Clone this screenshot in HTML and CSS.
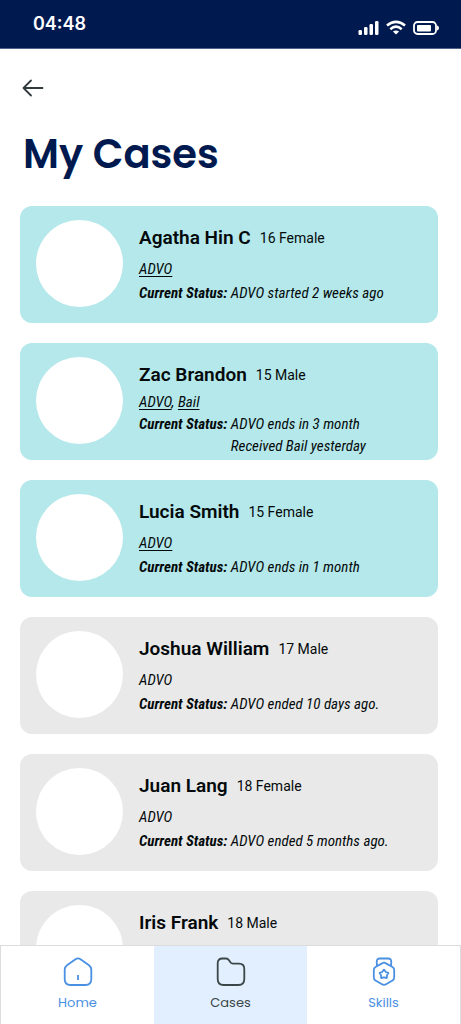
FILE: index.html
```html
<!DOCTYPE html>
<html lang="en">
<head>
<meta charset="utf-8">
<meta name="viewport" content="width=device-width, initial-scale=1">
<title>My Cases</title>
<link rel="stylesheet" href="styles.css">
</head>
<body>
<header class="status-bar">
  <time class="clock">04:48</time>
  <div class="indicators">
    <svg width="21" height="16" viewBox="0 0 21 16" fill="#fff" aria-hidden="true"><rect x="0.500" y="10" width="3.500" height="5" rx="1.200"/><rect x="6" y="7" width="3.500" height="8" rx="1.200"/><rect x="11.500" y="4" width="3.500" height="11" rx="1.200"/><rect x="17" y="1" width="3.500" height="14" rx="1.200"/></svg>
    <svg width="20" height="16" viewBox="0 0 20 16" fill="none" stroke="#fff" stroke-width="2.600" aria-hidden="true"><path d="M1 5.600Q10-2 19 5.600M4.300 9.200Q10 4.200 15.700 9.200"/><path d="M10 14.600L6.900 11.500Q10 9.300 13.100 11.500Z" fill="#fff" stroke="none"/></svg>
    <svg width="27" height="16" viewBox="0 0 27 16" aria-hidden="true"><rect x="1" y="2" width="22" height="12" rx="3.500" fill="none" stroke="#fff" stroke-width="1.800"/><rect x="4" y="5" width="14" height="6.500" rx="1" fill="#fff"/><path d="M24 5.500q2 .3 2 2.500t-2 2.500z" fill="#fff"/></svg>
  </div>
</header>
<main class="content">
  <button class="back" type="button" aria-label="Back">
    <svg width="22" height="18" viewBox="0 0 22 18" fill="none" stroke="#303b3d" stroke-width="1.800" stroke-linecap="round" stroke-linejoin="round" aria-hidden="true"><path d="M20.500 9H1.500M9 1.500L1.500 9L9 16.500"/></svg>
  </button>
  <h1 class="title">My Cases</h1>
  <div class="cases">
    <article class="card active">
      <div class="avatar"></div>
      <div class="info">
        <div class="person"><h2 class="name">Agatha Hin C</h2><span class="age">16 Female</span></div>
        <p class="line"><a class="order" href="#">ADVO</a></p>
        <p class="line"><b>Current Status:</b> ADVO started 2 weeks ago</p>
      </div>
    </article>
    <article class="card active compact">
      <div class="avatar"></div>
      <div class="info">
        <div class="person"><h2 class="name">Zac Brandon</h2><span class="age">15 Male</span></div>
        <p class="line"><a class="order" href="#">ADVO</a>, <a class="order" href="#">Bail</a></p>
        <div class="line status"><b>Current Status:&nbsp;</b><div>ADVO ends in 3 month<br>Received Bail yesterday</div></div>
      </div>
    </article>
    <article class="card active">
      <div class="avatar"></div>
      <div class="info">
        <div class="person"><h2 class="name">Lucia Smith</h2><span class="age">15 Female</span></div>
        <p class="line"><a class="order" href="#">ADVO</a></p>
        <p class="line"><b>Current Status:</b> ADVO ends in 1 month</p>
      </div>
    </article>
    <article class="card">
      <div class="avatar"></div>
      <div class="info">
        <div class="person"><h2 class="name">Joshua William</h2><span class="age">17 Male</span></div>
        <p class="line">ADVO</p>
        <p class="line"><b>Current Status:</b> ADVO ended 10 days ago.</p>
      </div>
    </article>
    <article class="card">
      <div class="avatar"></div>
      <div class="info">
        <div class="person"><h2 class="name">Juan Lang</h2><span class="age">18 Female</span></div>
        <p class="line">ADVO</p>
        <p class="line"><b>Current Status:</b> ADVO ended 5 months ago.</p>
      </div>
    </article>
    <article class="card">
      <div class="avatar"></div>
      <div class="info">
        <div class="person"><h2 class="name">Iris Frank</h2><span class="age">18 Male</span></div>
      </div>
    </article>
  </div>
</main>
<nav class="tabs">
  <a class="tab" href="#">
    <svg class="tab-icon" viewBox="0 0 30 30" aria-hidden="true"><path d="M12.500 2.200Q15 .6 17.500 2.200L26 8.200Q28.300 10 28.300 12.500V22Q28.300 28 22.500 28H7.500Q1.700 28 1.700 22V12.500Q1.700 10 4 8.200ZM15 18v5"/></svg>
    <span>Home</span>
  </a>
  <a class="tab current" href="#" aria-current="page">
    <svg class="tab-icon" viewBox="0 0 30 30" aria-hidden="true"><path d="M1.700 6Q1.700 1.500 6.500 1.500H10Q11.800 1.500 13 3.200L14.600 5.600Q15.300 6.600 17 6.600H23Q28.300 6.600 28.300 12V22Q28.300 28 22.500 28H7.500Q1.700 28 1.700 22Z"/></svg>
    <span>Cases</span>
  </a>
  <a class="tab" href="#">
    <svg class="tab-icon" viewBox="0 0 30 30" aria-hidden="true"><path d="M8 8.500L7.700 5Q7.500 1.500 11 1.500H19Q22.500 1.500 22.300 5L22 8.500M13 6.400Q15 5 17 6.400L23.500 10Q25.200 11 25.200 13V20.500Q25.200 22.500 23.500 23.500L17 27.200Q15 28.500 13 27.200L6.500 23.500Q4.800 22.500 4.800 20.500V13Q4.800 11 6.500 10ZM15 12.600L16.900 15L19.400 15.900L18 18.300L17.800 21L15 20.400L12.200 21L12 18.300L10.600 15.900L13.100 15Z"/></svg>
    <span>Skills</span>
  </a>
</nav>
</body>
</html>
```
FILE: styles.css
```css
* { box-sizing: border-box; }
body {
  margin: 0;
  height: 100vh;
  display: flex;
  flex-direction: column;
  background: #fff;
  color: #040a0b;
  font-family: Roboto, "Liberation Sans", sans-serif;
}
.status-bar {
  flex: none;
  height: 49px;
  padding: 0 21px 0 33px;
  display: flex;
  align-items: center;
  justify-content: space-between;
  background: #001a50;
  border-bottom: 1px solid #52618a;
}
.clock {
  color: #fff;
  font: 600 18px/24px Inter, sans-serif;
}
.indicators {
  display: flex;
  gap: 7px;
  padding-top: 7px;
}
.content {
  flex: 1;
  min-height: 0;
  overflow-y: auto;
  scrollbar-width: none;
  padding: 30px 23px 20px 20px;
}
.back {
  display: block;
  padding: 0 2px;
  border: 0;
  background: none;
}
.back svg { display: block; }
.title {
  margin: 27px 0 22px;
  padding-left: 3px;
  color: #001a50;
  font: 600 40px/60px Poppins, Inter, sans-serif;
}
.cases {
  display: flex;
  flex-direction: column;
  gap: 20px;
}
.card {
  min-height: 117px;
  padding: 14px 16px 0;
  display: flex;
  gap: 16px;
  border-radius: 12px;
  background: #e9e9e9;
}
.card.active { background: #b4e8ea; }
.avatar {
  flex: none;
  width: 87px;
  height: 87px;
  border-radius: 50%;
  background: #fff;
}
.info { padding-top: 6px; }
.person {
  display: flex;
  align-items: center;
  gap: 9px;
  margin-bottom: 7px;
}
.name {
  margin: 0;
  font-size: 19px;
  line-height: 24px;
  font-weight: 600;
}
.age { font-size: 14px; line-height: 24px; }
.line {
  margin: 0;
  font: italic 15px/24px "Roboto Condensed", Roboto, sans-serif;
}
.compact .person { margin-bottom: 4px; }
.compact .line { line-height: 22px; }
.status { display: flex; }
.order {
  color: inherit;
  text-decoration: underline;
  text-decoration-thickness: 1px;
  text-underline-offset: 2px;
}
.tabs {
  flex: none;
  height: 79px;
  display: grid;
  grid-template-columns: repeat(3, 1fr);
  border: 1px solid #dcdcdc;
  border-bottom: 0;
}
.tab {
  display: flex;
  flex-direction: column;
  align-items: center;
  gap: 6px;
  padding-top: 11px;
  background: #fff;
  color: #4a90e2;
  font: 400 13px/20px Poppins, Inter, sans-serif;
  text-decoration: none;
}
.tab.current { background: #e1efff; color: #3b4648; }
.tab-icon {
  width: 30px;
  height: 30px;
  fill: none;
  stroke: currentColor;
  stroke-width: 1.8;
  stroke-linejoin: round;
}
```
